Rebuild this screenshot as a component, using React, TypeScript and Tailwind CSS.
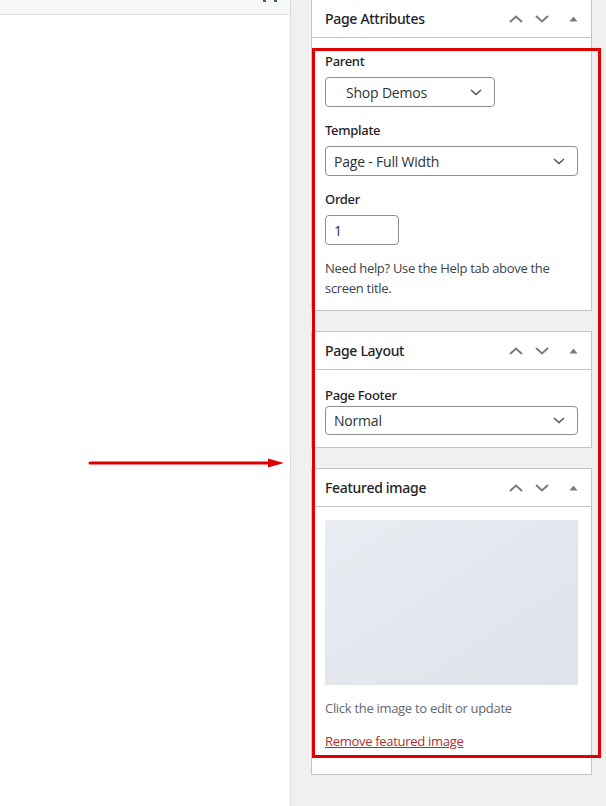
const font = { fontFamily: '"Open Sans", "Noto Sans", "Liberation Sans", sans-serif' };
const strong = { fontFamily: '"Noto Sans", "Open Sans", sans-serif' };

function PanelHeader({ title }: { title: string }) {
  return (
    <div className="h-[38px] flex items-center justify-between border-b border-[#c3c4c7] pl-[13px] pr-[13px]">
      <h2 className="text-[14px] font-medium tracking-[-0.3px] text-[#1d2327]" style={strong}>{title}</h2>
      <div className="flex items-center">
        <svg width="14" height="8" viewBox="0 0 14 8" className="mr-[12px]">
          <path d="M1 7l6-5.5L13 7" fill="none" stroke="#787c82" strokeWidth="2" />
        </svg>
        <svg width="14" height="8" viewBox="0 0 14 8" className="mr-[20px]">
          <path d="M1 1l6 5.5L13 1" fill="none" stroke="#787c82" strokeWidth="2" />
        </svg>
        <svg width="9" height="6" viewBox="0 0 9 6">
          <path d="M0.5 5.5L4.5 0.5L8.5 5.5z" fill="#787c82" />
        </svg>
      </div>
    </div>
  );
}

function Select({ value, className }: { value: string; className: string }) {
  return (
    <div className={`flex items-center justify-between border border-[#8c8f94] rounded-[4px] bg-white pr-[12px] text-[14px] tracking-[-0.2px] text-[#2c3338] ${className}`}>
      <span>{value}</span>
      <svg width="12" height="7" viewBox="0 0 12 7">
        <path d="M1 1l5 4.5L11 1" fill="none" stroke="#50575e" strokeWidth="1.6" />
      </svg>
    </div>
  );
}

function Label({ children, className = "" }: { children: string; className?: string }) {
  return (
    <p className={`leading-[20px] font-medium text-[#1d2327] ${className}`} style={strong}>
      {children}
    </p>
  );
}

export default function App() {
  return (
    <div className="relative w-[606px] h-[806px] flex overflow-hidden bg-[#f0f0f1]" style={font}>
      {/* editor column */}
      <div className="w-[291px] h-full bg-white border-r border-[#dcdcde] flex flex-col">
        <div className="h-[15px] bg-[#f6f7f7] border-b border-[#dcdcde] flex justify-end items-start pr-[13px] gap-[8px]">
          <span className="w-[3px] h-[2px] bg-[#50575e]" />
          <span className="w-[3px] h-[2px] bg-[#50575e]" />
        </div>
      </div>

      {/* sidebar */}
      <div className="flex-1 pl-[20px] pr-[14px]">
        <div className="bg-white border border-[#c3c4c7] border-t-0">
          <PanelHeader title="Page Attributes" />
          <div className="px-[13px] pt-[13px] pb-[12px] text-[13px] tracking-[-0.3px]">
            <Label>Parent</Label>
            <Select value="Shop Demos" className="mt-[6px] w-[170px] h-[30px] pl-[20px]" />
            <Label className="mt-[13px]">Template</Label>
            <Select value="Page - Full Width" className="mt-[6px] w-full h-[30px] pl-[8px]" />
            <Label className="mt-[13px]">Order</Label>
            <div className="mt-[6px] w-[74px] h-[30px] border border-[#8c8f94] rounded-[4px] pl-[8px] flex items-center text-[14px] text-[#2c3338]">1</div>
            <p className="mt-[13px] leading-[20px] text-[#3c434a]">Need help? Use the Help tab above the screen title.</p>
          </div>
        </div>

        <div className="mt-[20px] bg-white border border-[#c3c4c7]">
          <PanelHeader title="Page Layout" />
          <div className="px-[13px] pt-[15px] pb-[12px] text-[13px] tracking-[-0.3px]">
            <Label>Page Footer</Label>
            <Select value="Normal" className="mt-[1px] w-full h-[29px] pl-[8px]" />
          </div>
        </div>

        <div className="mt-[20px] bg-white border border-[#c3c4c7]">
          <PanelHeader title="Featured image" />
          <div className="px-[13px] pt-[13px] pb-[23px] text-[13px] tracking-[-0.3px]">
            <div className="h-[165px] bg-gradient-to-br from-[#e9ecf1] to-[#dee2ea]" />
            <p className="mt-[13px] leading-[20px] text-[#646970]">Click the image to edit or update</p>
            <p className="mt-[13px] leading-[20px] text-[#b32d2e] underline">Remove featured image</p>
          </div>
        </div>
      </div>

      {/* annotations */}
      <div className="absolute left-[312px] top-[48px] w-[289px] h-[710px] border-[3px] border-[#e00000]" />
      <svg className="absolute left-[88px] top-[456px]" width="198" height="14" viewBox="0 0 198 14">
        <line x1="2" y1="7" x2="182" y2="7" stroke="#e00000" strokeWidth="3" strokeLinecap="round" />
        <path d="M180 2.5L196 7L180 11.5z" fill="#e00000" />
      </svg>
    </div>
  );
}
